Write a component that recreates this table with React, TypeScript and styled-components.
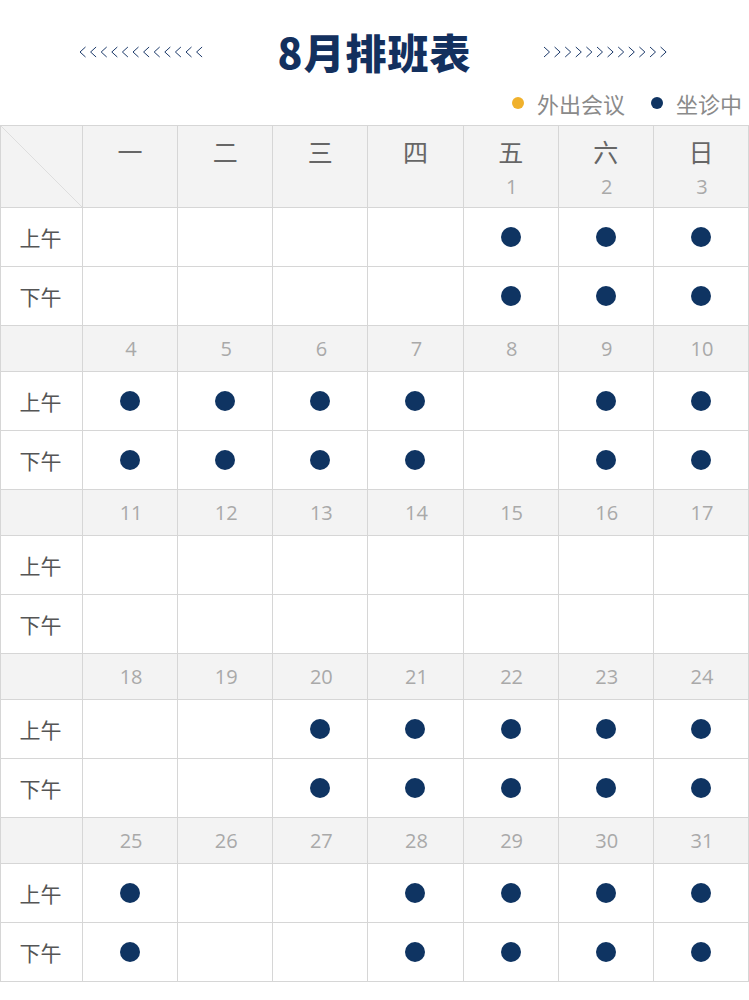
import React from "react";
import styled, { createGlobalStyle } from "styled-components";

const GlobalStyle = createGlobalStyle`
  body {
    margin: 0;
    background: #ffffff;
    font-family: "Open Sans", "Noto Sans CJK SC", sans-serif;
  }
`;

const NAVY = "#0f3462";
const LINE = "#d6d6d6";
const SHADE = "#f3f3f3";

const Page = styled.div`
  width: 749px;
  background: #fff;
`;

const TitleBar = styled.div`
  display: flex;
  align-items: center;
  justify-content: center;
  gap: 72px;
  height: 64px;
  padding-top: 20px;
`;

const Title = styled.h1`
  margin: -2px 0 0;
  font-family: "Noto Sans CJK SC", sans-serif;
  font-size: 41px;
  font-weight: 900;
  color: #13305e;
  line-height: 1;
  letter-spacing: 1px;
`;

const Legend = styled.div`
  display: flex;
  justify-content: flex-end;
  align-items: center;
  gap: 26px;
  height: 37px;
  padding: 0 7px 4px 0;
`;

const LegendItem = styled.div`
  display: flex;
  align-items: center;
  gap: 13px;
  font-family: "Noto Sans CJK SC", sans-serif;
  font-size: 22px;
  color: #8a8a8a;
`;

const LegendDot = styled.span<{ $color: string }>`
  width: 12px;
  height: 12px;
  border-radius: 50%;
  background: ${(p) => p.$color};
`;

const Table = styled.div`
  display: grid;
  grid-template-columns: 82px repeat(7, 1fr);
  border-top: 1px solid ${LINE};
  border-left: 1px solid ${LINE};
`;

const Cell = styled.div<{ $kind: "head" | "date" | "slot" }>`
  box-sizing: border-box;
  height: ${(p) => (p.$kind === "head" ? 82 : p.$kind === "date" ? 46 : 59)}px;
  border-right: 1px solid ${LINE};
  border-bottom: 1px solid ${LINE};
  background: ${(p) => (p.$kind === "slot" ? "#fff" : SHADE)};
  display: flex;
  flex-direction: column;
  align-items: center;
  justify-content: ${(p) => (p.$kind === "head" ? "flex-start" : "center")};
`;

const Corner = styled(Cell)`
  background: linear-gradient(
      to top right,
      transparent calc(50% - 0.7px),
      #dedede 50%,
      transparent calc(50% + 0.7px)
    ),
    ${SHADE};
`;

const Weekday = styled.div`
  margin-top: 9px;
  font-family: "Noto Sans CJK SC", sans-serif;
  font-size: 25px;
  font-weight: 400;
  line-height: 32px;
  color: #666;
`;

const DayNum = styled.div<{ $inHead?: boolean }>`
  margin-top: ${(p) => (p.$inHead ? 7 : 0)}px;
  padding-left: 2px;
  font-size: 20px;
  line-height: 26px;
  color: #a9a9a9;
`;

const SlotLabel = styled.div`
  font-family: "Noto Sans CJK SC", sans-serif;
  font-size: 21px;
  color: #555;
  margin-right: 2px;
`;

const Dot = styled.span`
  width: 20px;
  height: 20px;
  border-radius: 50%;
  background: ${NAVY};
`;

const Chevrons = ({ dir }: { dir: "left" | "right" }) => (
  <svg width="127" height="12" viewBox="0 0 127 12">
    {Array.from({ length: 12 }, (_, i) => {
      const x = i * 10.6 + 1;
      const d =
        dir === "left"
          ? `M${x + 5.5} 1 L${x} 6 L${x + 5.5} 11`
          : `M${x} 1 L${x + 5.5} 6 L${x} 11`;
      return <path key={i} d={d} fill="none" stroke="#1d3a6a" strokeWidth="1" />;
    })}
  </svg>
);

const WEEKDAYS = ["一", "二", "三", "四", "五", "六", "日"];

type Week = { dates: (number | null)[]; on: number[] };

const weeks: Week[] = [
  { dates: [null, null, null, null, 1, 2, 3], on: [4, 5, 6] },
  { dates: [4, 5, 6, 7, 8, 9, 10], on: [0, 1, 2, 3, 5, 6] },
  { dates: [11, 12, 13, 14, 15, 16, 17], on: [] },
  { dates: [18, 19, 20, 21, 22, 23, 24], on: [2, 3, 4, 5, 6] },
  { dates: [25, 26, 27, 28, 29, 30, 31], on: [0, 3, 4, 5, 6] },
];

const SLOTS = ["上午", "下午"];

export default function App() {
  return (
    <Page>
      <GlobalStyle />
      <TitleBar>
        <Chevrons dir="left" />
        <Title>8月排班表</Title>
        <Chevrons dir="right" />
      </TitleBar>
      <Legend>
        <LegendItem>
          <LegendDot $color="#f0b12c" />
          外出会议
        </LegendItem>
        <LegendItem>
          <LegendDot $color={NAVY} />
          坐诊中
        </LegendItem>
      </Legend>
      <Table>
        <Corner $kind="head" />
        {WEEKDAYS.map((w, i) => (
          <Cell $kind="head" key={w}>
            <Weekday>{w}</Weekday>
            {weeks[0].dates[i] !== null && <DayNum $inHead>{weeks[0].dates[i]}</DayNum>}
          </Cell>
        ))}
        {weeks.map((week, wi) => (
          <React.Fragment key={wi}>
            {wi > 0 && (
              <>
                <Cell $kind="date" />
                {week.dates.map((d, i) => (
                  <Cell $kind="date" key={i}>
                    <DayNum>{d}</DayNum>
                  </Cell>
                ))}
              </>
            )}
            {SLOTS.map((s) => (
              <React.Fragment key={s}>
                <Cell $kind="slot">
                  <SlotLabel>{s}</SlotLabel>
                </Cell>
                {week.dates.map((_, i) => (
                  <Cell $kind="slot" key={i}>
                    {week.on.includes(i) && <Dot />}
                  </Cell>
                ))}
              </React.Fragment>
            ))}
          </React.Fragment>
        ))}
      </Table>
    </Page>
  );
}
